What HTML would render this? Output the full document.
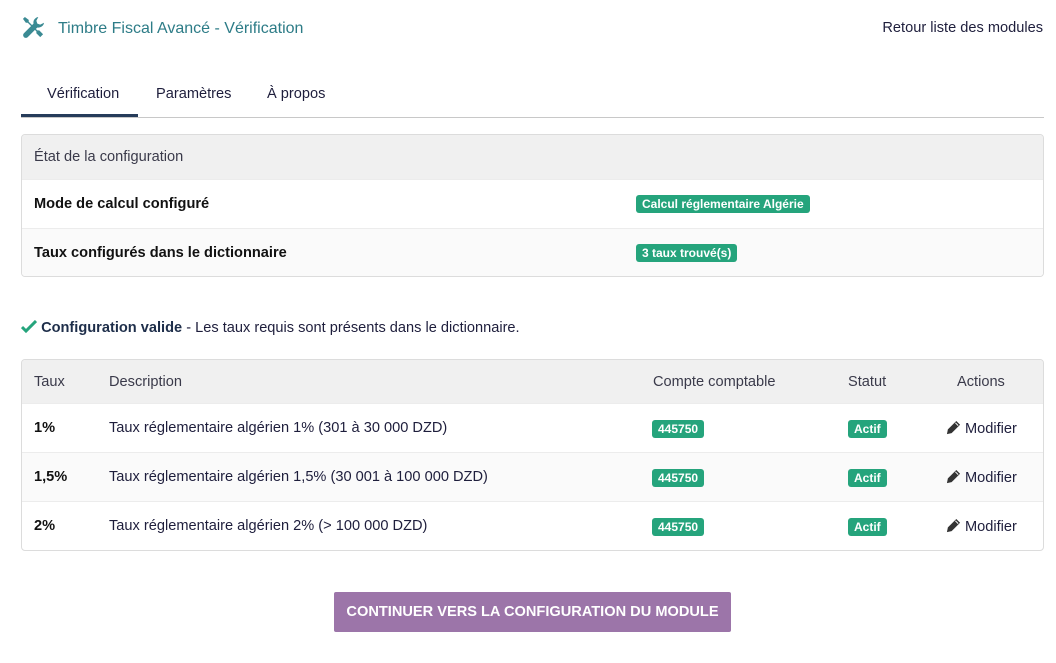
<!DOCTYPE html>
<html><head><meta charset="utf-8"><style>
*{box-sizing:border-box;margin:0;padding:0}
body{width:1056px;height:663px;background:#fff;font-family:"Liberation Sans",sans-serif;font-size:14.6px;color:#1e1e3c;position:relative;overflow:hidden}
.abs{position:absolute}
.title{left:58px;top:20px;font-size:16px;color:#2d7c87}
.back{right:13px;top:20px;font-size:14.6px;color:#1e1e3c}
.tabs{left:21px;top:70px;width:1023px;height:48px;border-bottom:1px solid #c8c8c8}
.tab{position:absolute;top:16px;color:#1e1e3c}
.card{left:21px;width:1023px;border:1px solid #dcdcdc;border-radius:4px;overflow:hidden}
.row{height:49px;position:relative;border-top:1px solid #ececec}
.row>div{position:absolute;top:16px}
.hd{background:#f0f0f0;border-top:none;height:43px}
.hd>div{top:14px;color:#3a3a4a}
.b{font-weight:bold;color:#111}
.badge{display:inline-block;background:#25a47c;color:#fff;font-weight:bold;font-size:12px;padding:2px 6px;border-radius:3px;line-height:14px}
.alt{background:#fafafa}
.btn{left:334px;top:592px;width:397px;height:40px;background:#9c75a9;color:#fff;font-weight:bold;font-size:14.6px;text-align:center;line-height:40px;border-radius:2px}
.pen{display:inline-block;vertical-align:-2px;margin-right:4px}
</style></head><body>
<svg class="abs" style="left:22px;top:16px" width="23" height="23" viewBox="0 0 24 24"><g fill="#3a8a93"><path d="M1 3l2-2 4 3 0 2 9 9 2 0 4 4-3 3-4-4 0-2-9-9-2 0z"/><path d="M17 1a6 6 0 0 0-5 7L2 18a2.5 2.5 0 0 0 4 4l10-10a6 6 0 0 0 7-5l-4 2-3-1-1-3z"/></g></svg>
<div class="abs title">Timbre Fiscal Avancé - Vérification</div>
<div class="abs back">Retour liste des modules</div>
<div class="abs tabs">
<div class="tab" style="left:26px">Vérification</div>
<div class="tab" style="left:135px">Paramètres</div>
<div class="tab" style="left:246px">À propos</div>
<div style="position:absolute;left:0;top:44px;width:117px;height:3px;background:#263c5a"></div>
</div>
<div class="abs card" style="top:134px">
<div class="row hd" style="height:44px"><div style="left:12px">État de la configuration</div></div>
<div class="row"><div class="b" style="left:12px">Mode de calcul configuré</div><div style="left:614px;top:15px"><span class="badge">Calcul réglementaire Algérie</span></div></div>
<div class="row alt" style="height:48px"><div class="b" style="left:12px">Taux configurés dans le dictionnaire</div><div style="left:614px;top:15px"><span class="badge">3 taux trouvé(s)</span></div></div>
</div>
<div class="abs" style="left:21px;top:320px;color:#1e1e3c"><svg width="16" height="13" viewBox="0 0 16 13" style="vertical-align:-1px"><path d="M1 7l4 4 10-10" stroke="#25a47c" stroke-width="3" fill="none"/></svg> <b style="color:#1e2e4a">Configuration valide</b> - Les taux requis sont présents dans le dictionnaire.</div>
<div class="abs card" style="top:359px">
<div class="row hd"><div style="left:12px">Taux</div><div style="left:87px">Description</div><div style="left:631px">Compte comptable</div><div style="left:826px">Statut</div><div style="left:935px">Actions</div></div>
<div class="row"><div class="b" style="left:12px">1%</div><div style="left:87px">Taux réglementaire algérien 1% (301 à 30 000 DZD)</div><div style="left:630px;top:16px"><span class="badge">445750</span></div><div style="left:826px;top:16px"><span class="badge">Actif</span></div><div style="left:924px"><svg class="pen" width="15" height="15" viewBox="0 0 16 16"><path d="M11 1l4 4-9 9-5 1 1-5z" fill="#333"/><path d="M10 3l3 3" stroke="#fff" stroke-width="1"/></svg>Modifier</div></div>
<div class="row alt"><div class="b" style="left:12px">1,5%</div><div style="left:87px">Taux réglementaire algérien 1,5% (30 001 à 100 000 DZD)</div><div style="left:630px;top:16px"><span class="badge">445750</span></div><div style="left:826px;top:16px"><span class="badge">Actif</span></div><div style="left:924px"><svg class="pen" width="15" height="15" viewBox="0 0 16 16"><path d="M11 1l4 4-9 9-5 1 1-5z" fill="#333"/><path d="M10 3l3 3" stroke="#fafafa" stroke-width="1"/></svg>Modifier</div></div>
<div class="row"><div class="b" style="left:12px">2%</div><div style="left:87px">Taux réglementaire algérien 2% (&gt; 100 000 DZD)</div><div style="left:630px;top:16px"><span class="badge">445750</span></div><div style="left:826px;top:16px"><span class="badge">Actif</span></div><div style="left:924px"><svg class="pen" width="15" height="15" viewBox="0 0 16 16"><path d="M11 1l4 4-9 9-5 1 1-5z" fill="#333"/><path d="M10 3l3 3" stroke="#fff" stroke-width="1"/></svg>Modifier</div></div>
</div>
<div class="abs btn">CONTINUER VERS LA CONFIGURATION DU MODULE</div>
</body></html>
